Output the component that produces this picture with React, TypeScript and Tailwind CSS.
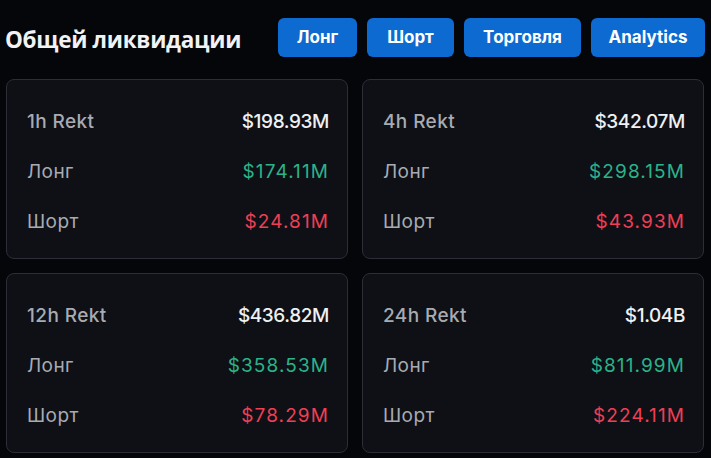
const groups = [
  { label: "1h Rekt", total: "$198.93M", long: "$174.11M", short: "$24.81M" },
  { label: "4h Rekt", total: "$342.07M", long: "$298.15M", short: "$43.93M" },
  { label: "12h Rekt", total: "$436.82M", long: "$358.53M", short: "$78.29M" },
  { label: "24h Rekt", total: "$1.04B", long: "$811.99M", short: "$224.11M" },
];

function Row({ name, value, valueClass, nameClass }: { name: string; value: string; valueClass: string; nameClass: string }) {
  return (
    <div className="flex h-[50px] items-center justify-between">
      <span className={nameClass}>{name}</span>
      <span className={valueClass}>{value}</span>
    </div>
  );
}

export default function App() {
  return (
    <div className="h-[458px] w-[711px] overflow-hidden bg-[#05060a] font-['Inter','Noto_Sans',sans-serif]">
      <div className="flex h-[79px] items-start pt-[18px]">
        <h1 className="ml-[5px] mt-[5px] text-[22.5px] font-bold tracking-[-0.3px] text-[#f1f2f4] font-['Open_Sans',sans-serif]">
          Общей ликвидации
        </h1>
        <div className="ml-auto mr-[6px] flex gap-[10px]">
          {["Лонг", "Шорт", "Торговля", "Analytics"].map((b, i) => (
            <button
              key={b}
              className={`h-[39px] rounded-[6px] bg-[#0d6ad1] text-[17px] font-bold text-white ${
                i === 0 ? "w-[79px]" : i === 1 ? "w-[87px]" : i === 2 ? "w-[117px]" : "w-[114px]"
              }`}
            >
              {b}
            </button>
          ))}
        </div>
      </div>
      <div className="grid grid-cols-2 gap-x-[14px] gap-y-[14px] pl-[6px] pr-[7px]">
        {groups.map((g) => (
          <div
            key={g.label}
            className="h-[180px] rounded-[8px] border border-[#2b2e36] bg-[#0e1016] pl-[20px] pr-[18px] pt-[17px] text-[19px]"
          >
            <Row name={g.label} value={g.total} nameClass="font-medium tracking-[0.4px] text-[#a7abb3]" valueClass="font-medium tracking-[-0.4px] text-[#eef0f3]" />
            <Row name="Лонг" value={g.long} nameClass="tracking-[0.4px] text-[#a7abb3]" valueClass="tracking-[1.1px] text-[#2bb38a]" />
            <Row name="Шорт" value={g.short} nameClass="tracking-[0.4px] text-[#a7abb3]" valueClass="tracking-[1.1px] text-[#ee3f55]" />
          </div>
        ))}
      </div>
    </div>
  );
}
